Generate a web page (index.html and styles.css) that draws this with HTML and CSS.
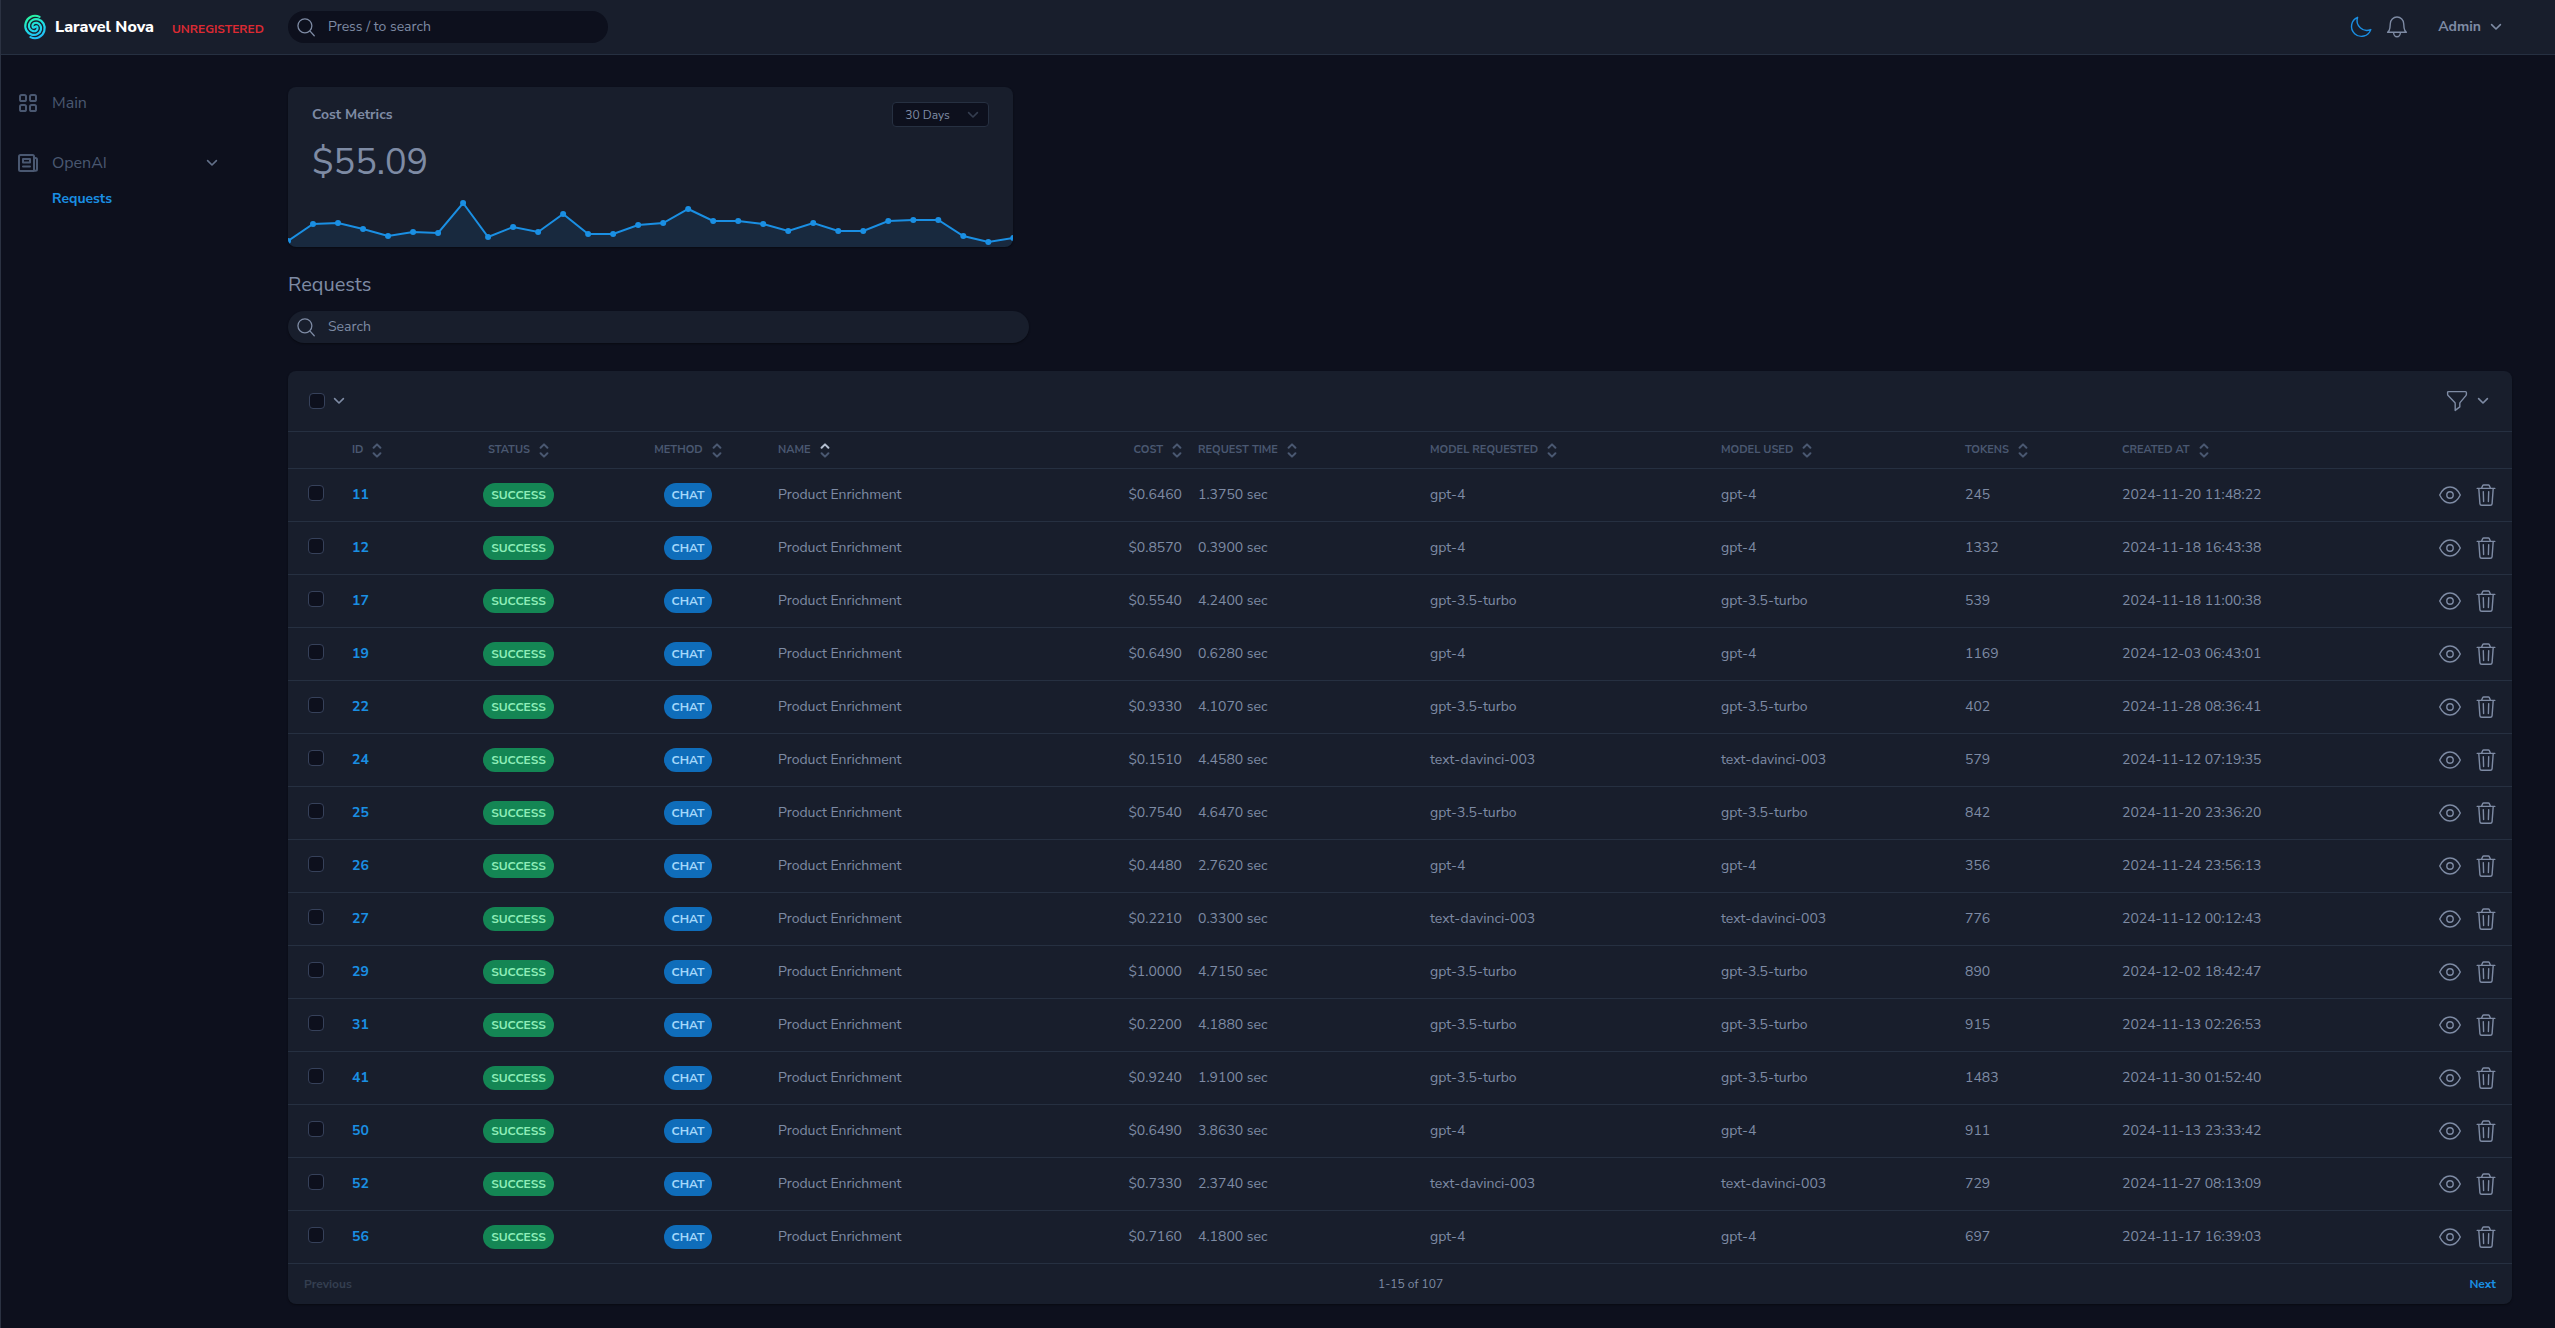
FILE: index.html
```html
<!DOCTYPE html>
<html lang="en">
<head>
<meta charset="utf-8">
<meta name="viewport" content="width=device-width, initial-scale=1">
<title>Requests</title>
<link rel="stylesheet" href="styles.css">
</head>
<body>
<svg class="sprite" aria-hidden="true">
  <symbol id="i-search" viewBox="0 0 24 24"><path d="M16.2 16.2L21 21.6M18.4 10.7a7.6 7.6 0 1 1-15.2 0a7.6 7.6 0 0 1 15.2 0z"/></symbol>
  <symbol id="i-chevron" viewBox="0 0 12 8"><path d="M1.6 1.6L6 6l4.400-4.400"/></symbol>
  <symbol id="i-sort-up" viewBox="0 0 10 6"><path d="M1.600 4.800L5 1.400l3.400 3.400"/></symbol>
  <symbol id="i-sort-down" viewBox="0 0 10 6"><path d="M1.600 1.200L5 4.600l3.400-3.400"/></symbol>
  <symbol id="i-eye" viewBox="0 0 24 24"><path d="M1.700 12C4.200 6.700 7.800 4 12 4s7.800 2.700 10.300 8c-2.500 5.300-6.100 8-10.300 8S4.200 17.300 1.700 12z"/><circle cx="12" cy="12" r="3.200"/></symbol>
  <symbol id="i-trash" viewBox="0 0 24 24"><path d="M3.200 5.400h17.600M7.500 5.200L8.700 2.600Q9 2 9.600 2h4.800q.6 0 .9.600l1.200 2.600M4.800 5.600l1.100 15q.1 1.700 1.800 1.700h8.600q1.700 0 1.800-1.700l1.100-15M9.300 8.600l.3 10M14.700 8.600l-.3 10"/></symbol>
  <symbol id="i-filter" viewBox="0 0 24 24"><path d="M2.600 3.600Q2.600 2.600 3.600 2.600h16.800q1 0 1 1v1.600q0 .8-.5 1.400l-5.700 6.800q-.4.600-.4 1.300v3.200l-4.600 3.500v-6.700q0-.7-.4-1.300L3.100 6.600q-.5-.6-.5-1.400z"/></symbol>
  <symbol id="i-moon" viewBox="0 0 24 24"><path d="M21.800 14.600A9.900 9.900 0 1 1 8.600 2.300a9.900 9.900 0 0 0 13.200 12.300z"/></symbol>
  <symbol id="i-bell" viewBox="0 0 24 24"><path d="M2.600 17.300h18.800c-1.300-1-2.100-2.500-2.300-4.300l-.4-4.300a6.700 6.700 0 0 0-13.400 0L4.900 13c-.2 1.800-1 3.300-2.300 4.300zM8.600 17.500c0 2.300 1.500 4.200 3.400 4.200s3.400-1.900 3.400-4.200"/></symbol>
  <symbol id="i-grid" viewBox="0 0 20 20"><rect x="2" y="2" width="6" height="6" rx="1.600"/><rect x="12" y="2" width="6" height="6" rx="1.600"/><rect x="2" y="12" width="6" height="6" rx="1.600"/><rect x="12" y="12" width="6" height="6" rx="1.600"/></symbol>
  <symbol id="i-news" viewBox="0 0 22 20"><path d="M2 3.500Q2 2 3.500 2h12Q17 2 17 3.500V18H3.500Q2 18 2 16.500zM17 5h1.500Q20 5 20 6.500v9.700a1.500 1.500 0 0 1-3 0M6 6h7v3.500H6zM6 13.500h7"/></symbol>
</svg>

<header class="topbar">
  <div class="brand">
    <a class="logo" href="#">
      <svg class="logo-mark" viewBox="-12 -12 24 24" aria-hidden="true">
        <defs><linearGradient id="swirl" gradientUnits="userSpaceOnUse" x1="-4" y1="-11" x2="4" y2="11"><stop offset="0" stop-color="#2af598"/><stop offset=".45" stop-color="#1fe0e4"/><stop offset="1" stop-color="#22b9fa"/></linearGradient></defs>
        <g fill="none" stroke="url(#swirl)" stroke-width="2" stroke-linecap="round" transform="scale(1.100)">
          <path d="M0 0Q-1 1-1.700.5Q-2.300 0-2.300-1.150Q-2.300-2.300-1.150-3.200Q0-4.100 1.750-3.800Q3.500-3.500 4.700-1.750Q5.900 0 5.350 2.400Q4.800 4.800 2.400 6.250Q0 7.700-3.050 6.900Q-6.100 6.100-7.800 3.050Q-9.500 0-8.450-3.700Q-7.400-7.400-3.700-9.300Q0-11.200 4.150-9.200"/>
          <path d="M0 0Q1-1 1.700-.5Q2.300 0 2.300 1.150Q2.300 2.300 1.150 3.200Q0 4.100-1.750 3.800Q-3.500 3.500-4.700 1.750Q-5.900 0-5.350-2.400Q-4.800-4.800-2.400-6.250Q0-7.700 3.050-6.900Q6.100-6.100 7.800-3.050Q9.500 0 8.450 3.700Q7.400 7.400 3.700 9.300Q0 11.200-4.150 9.200"/>
        </g>
      </svg>
      <span>Laravel Nova</span>
    </a>
    <span class="unregistered">UNREGISTERED</span>
  </div>
  <label class="field global-search">
    <svg class="icon"><use href="#i-search"/></svg>
    <input type="search" placeholder="Press / to search" aria-label="Press / to search">
  </label>
  <div class="user-tools">
    <button class="tool moon" aria-label="Theme"><svg class="icon"><use href="#i-moon"/></svg></button>
    <button class="tool" aria-label="Notifications"><svg class="icon"><use href="#i-bell"/></svg></button>
    <button class="account">Admin <svg class="chevron"><use href="#i-chevron"/></svg></button>
  </div>
</header>

<div class="shell">
  <nav class="sidebar">
    <a class="nav-item" href="#"><svg class="nav-icon"><use href="#i-grid"/></svg><span>Main</span></a>
    <button class="nav-item"><svg class="nav-icon"><use href="#i-news"/></svg><span>OpenAI</span><svg class="chevron"><use href="#i-chevron"/></svg></button>
    <a class="nav-sub" href="#">Requests</a>
  </nav>

  <main class="content">
    <div class="metrics">
      <section class="metric">
        <div class="metric-head">
          <h2>Cost Metrics</h2>
          <span class="select">
            <select aria-label="Range"><option>30 Days</option></select>
            <svg class="chevron"><use href="#i-chevron"/></svg>
          </span>
        </div>
        <p class="metric-value">$55.09</p>
        <svg class="trend" id="trend" viewBox="0 0 725 58" preserveAspectRatio="none" aria-hidden="true"></svg>
      </section>
    </div>

    <h1>Requests</h1>
    <label class="field resource-search">
      <svg class="icon"><use href="#i-search"/></svg>
      <input type="search" placeholder="Search" aria-label="Search">
    </label>

    <section class="panel">
      <div class="toolbar">
        <div class="tool-group">
          <input type="checkbox" aria-label="Select all">
          <button class="plain" aria-label="Selection options"><svg class="chevron"><use href="#i-chevron"/></svg></button>
        </div>
        <button class="plain filter" aria-label="Filters"><svg class="icon"><use href="#i-filter"/></svg><svg class="chevron"><use href="#i-chevron"/></svg></button>
      </div>
      <table>
        <colgroup>
          <col class="c-check"><col class="c-id"><col class="c-status"><col class="c-method"><col class="c-name"><col class="c-cost"><col class="c-time"><col class="c-requested"><col class="c-used"><col class="c-tokens"><col class="c-created"><col class="c-actions">
        </colgroup>
        <thead><tr id="head"></tr></thead>
        <tbody id="rows"></tbody>
      </table>
      <div class="pager">
        <button class="page" disabled>Previous</button>
        <span>1-15 of 107</span>
        <button class="page next">Next</button>
      </div>
    </section>
  </main>
</div>
<script src="app.js"></script>
</body>
</html>
```
FILE: styles.css
```css
* { box-sizing: border-box; }

:root {
  --page: #0d101d;
  --card: #181e2c;
  --line: #263041;
  --text: #7e8ba4;
  --dim: #4a5871;
  --blue: #1a8fe3;
}

body {
  margin: 0;
  min-height: 100vh;
  border-left: 1px solid #2b3242;
  background: var(--page);
  color: var(--text);
  font: 14px/20px "Nunito Sans", "Nunito", "Open Sans", sans-serif;
}

button, input, select { font: inherit; color: inherit; }
button { padding: 0; border: 0; background: none; cursor: pointer; }
a { color: inherit; text-decoration: none; }
h1, h2, p { margin: 0; }

.sprite { position: absolute; width: 0; height: 0; }
.icon, .nav-icon, .chevron, .sort svg {
  display: block;
  flex: none;
  fill: none;
  stroke: currentColor;
  stroke-linecap: round;
  stroke-linejoin: round;
}
.icon { width: 24px; height: 24px; stroke-width: 1.4px; }
.chevron { width: 12px; height: 8px; stroke-width: 1.6px; }

/* Top bar */
.topbar {
  display: flex;
  align-items: center;
  height: 55px;
  padding-right: 53px;
  border-bottom: 1px solid var(--line);
  background: var(--card);
}
.brand { display: flex; align-items: center; gap: 18px; width: 287px; padding-left: 22px; }
.logo { display: flex; align-items: center; gap: 8px; color: #fff; font-size: 16px; font-weight: 800; }
.logo-mark { width: 24px; height: 24px; overflow: visible; }
.unregistered { padding-top: 3px; color: #dc2a33; font-size: 12px; font-weight: 700; }

.field { display: flex; align-items: center; gap: 10px; height: 32px; padding: 0 16px 0 6px; border-radius: 16px; }
.field .icon { height: 22px; }
.field input {
  flex: 1;
  min-width: 0;
  padding: 0;
  border: 0;
  outline: 0;
  background: none;
  appearance: none;
}
.field input::placeholder { color: var(--text); opacity: 1; }
.global-search { width: 320px; background: var(--page); }

.user-tools { display: flex; align-items: center; margin-left: auto; }
.tool { margin-right: 12px; }
.tool + .account { margin-left: 17px; }
.moon { color: var(--blue); }
.account { display: flex; align-items: center; gap: 9px; font-weight: 700; }

/* Layout */
.shell { display: flex; align-items: flex-start; }
.sidebar { flex: none; width: 239px; padding-top: 32px; color: var(--dim); }
.nav-item { display: flex; align-items: center; width: 100%; height: 32px; padding: 0 22px 0 16px; font-size: 16px; text-align: left; }
.nav-item + .nav-item { margin-top: 28px; margin-bottom: 8px; }
.nav-icon { width: 22px; height: 20px; margin-right: 13px; stroke-width: 2px; }
.nav-item .chevron { margin-left: auto; color: #627089; }
.nav-sub { display: block; padding-left: 51px; color: var(--blue); font-weight: 700; line-height: 24px; }

.content { flex: 1; min-width: 0; padding: 32px 43px 24px 48px; }
.metrics { display: grid; grid-template-columns: repeat(3, minmax(0, 1fr)); gap: 24px; }

/* Metric card */
.metric { overflow: hidden; border-radius: 8px; background: var(--card); box-shadow: 0 1px 2px #0006; }
.metric-head { display: flex; align-items: center; justify-content: space-between; padding: 15px 24px 0; }
.metric h2 { font-size: 14px; font-weight: 700; }
.select { display: grid; align-items: center; width: 97px; }
.select select, .select .chevron { grid-area: 1 / 1; }
.select select { height: 25px; padding: 0 12px; border: 1px solid var(--line); border-radius: 4px; background: var(--page); font-size: 12px; appearance: none; }
.select .chevron { justify-self: end; margin-right: 10px; color: #343d4f; pointer-events: none; }
.metric-value { margin-top: 10px; padding: 0 24px; font-size: 36px; line-height: 52px; }
.trend { display: block; width: 100%; height: 58px; }
.trend polygon { fill: var(--blue); opacity: .1; }
.trend polyline { fill: none; stroke: var(--blue); stroke-width: 2px; }
.trend circle { fill: var(--blue); }

h1 { margin: 23px 0 11px; font-size: 20px; font-weight: 400; line-height: 30px; }
.resource-search { width: 33.3333%; background: var(--card); box-shadow: 0 1px 2px #0006; }

/* Resource table */
.panel { margin-top: 28px; border-radius: 8px; background: var(--card); box-shadow: 0 1px 2px #0006; }
.toolbar { display: flex; align-items: center; justify-content: space-between; height: 60px; padding: 0 23px 0 21px; }
.tool-group { display: flex; align-items: center; gap: 8px; }
.filter { display: flex; align-items: center; gap: 8px; }

input[type="checkbox"] {
  display: block;
  width: 16px;
  height: 16px;
  margin: 0;
  border: 1px solid #36415a;
  border-radius: 4px;
  background: var(--page);
  appearance: none;
}
input[type="checkbox"]:checked { background: var(--blue); }

table { width: 100%; border-spacing: 0; table-layout: fixed; }
th, td { padding: 0 8px; border-top: 1px solid var(--line); text-align: left; white-space: nowrap; }
th { height: 37px; color: var(--dim); font-size: 11px; font-weight: 700; text-transform: uppercase; }
td { height: 53px; }
.c-check { width: 56px; }
.c-id { width: 87px; }
.c-status { width: 175px; }
.c-method { width: 164px; }
.c-name { width: 290px; }
.c-cost { width: 130px; }
.c-time { width: 232px; }
.c-requested { width: 291px; }
.c-used { width: 244px; }
.c-tokens { width: 157px; }
.c-created { width: 260px; }
.c-actions { width: 138px; }
.center { text-align: center; }
.right { text-align: right; }
.check { padding: 0 0 4px 20px; }

.sort { display: inline-flex; align-items: center; gap: 9px; font-weight: inherit; text-transform: inherit; vertical-align: middle; }
.arrows { display: grid; gap: 3px; }
.sort svg { width: 10px; height: 6px; stroke-width: 2px; }
.sort .active { color: #b4bfd0; }

.id { color: var(--blue); font-weight: 700; }
.badge { display: inline-block; padding: 0 8px; border-radius: 12px; font-size: 12px; font-weight: 700; line-height: 24px; vertical-align: middle; }
.success { background: #148654; color: #8eedb8; }
.chat { background: #0f6dba; color: #a5d8fa; }
.actions { display: flex; justify-content: flex-end; gap: 12px; padding-right: 6px; }

.pager { display: flex; align-items: center; justify-content: space-between; height: 41px; padding: 0 16px; border-top: 1px solid var(--line); font-size: 12px; }
.page { font-weight: 700; }
.page:disabled { color: #343e50; }
.next { color: var(--blue); }
```
FILE: app.js
```js
const columns = [
  ["ID", ""], ["Status", "center"], ["Method", "center"], ["Name", "", true],
  ["Cost", "right"], ["Request Time", ""], ["Model Requested", ""],
  ["Model Used", ""], ["Tokens", ""], ["Created At", ""]
];

const requests = [
  [11, "$0.6460", "1.3750", "gpt-4", 245, "2024-11-20 11:48:22"],
  [12, "$0.8570", "0.3900", "gpt-4", 1332, "2024-11-18 16:43:38"],
  [17, "$0.5540", "4.2400", "gpt-3.5-turbo", 539, "2024-11-18 11:00:38"],
  [19, "$0.6490", "0.6280", "gpt-4", 1169, "2024-12-03 06:43:01"],
  [22, "$0.9330", "4.1070", "gpt-3.5-turbo", 402, "2024-11-28 08:36:41"],
  [24, "$0.1510", "4.4580", "text-davinci-003", 579, "2024-11-12 07:19:35"],
  [25, "$0.7540", "4.6470", "gpt-3.5-turbo", 842, "2024-11-20 23:36:20"],
  [26, "$0.4480", "2.7620", "gpt-4", 356, "2024-11-24 23:56:13"],
  [27, "$0.2210", "0.3300", "text-davinci-003", 776, "2024-11-12 00:12:43"],
  [29, "$1.0000", "4.7150", "gpt-3.5-turbo", 890, "2024-12-02 18:42:47"],
  [31, "$0.2200", "4.1880", "gpt-3.5-turbo", 915, "2024-11-13 02:26:53"],
  [41, "$0.9240", "1.9100", "gpt-3.5-turbo", 1483, "2024-11-30 01:52:40"],
  [50, "$0.6490", "3.8630", "gpt-4", 911, "2024-11-13 23:33:42"],
  [52, "$0.7330", "2.3740", "text-davinci-003", 729, "2024-11-27 08:13:09"],
  [56, "$0.7160", "4.1800", "gpt-4", 697, "2024-11-17 16:39:03"]
];

// Chart heights measured from the top of the 58px trend area.
const trend = [52, 35, 34, 40, 47, 43, 44, 14, 48, 38, 43, 25, 45, 45, 36, 34, 20, 32, 32, 35, 42, 34, 42, 42, 32, 31, 31, 47, 53, 49];

document.getElementById("head").innerHTML = "<th></th>" + columns.map(([label, align, sorted]) => `
  <th class="${align}"><button class="sort">${label}
    <span class="arrows">
      <svg class="${sorted ? "active" : ""}"><use href="#i-sort-up"/></svg>
      <svg><use href="#i-sort-down"/></svg>
    </span>
  </button></th>`).join("") + "<th></th>";

document.getElementById("rows").innerHTML = requests.map(([id, cost, time, model, tokens, created]) => `
  <tr>
    <td class="check"><input type="checkbox" aria-label="Select ${id}"></td>
    <td><a class="id" href="#">${id}</a></td>
    <td class="center"><span class="badge success">SUCCESS</span></td>
    <td class="center"><span class="badge chat">CHAT</span></td>
    <td>Product Enrichment</td>
    <td class="right">${cost}</td>
    <td>${time} sec</td>
    <td>${model}</td>
    <td>${model}</td>
    <td>${tokens}</td>
    <td>${created}</td>
    <td><div class="actions">
      <a href="#" aria-label="View ${id}"><svg class="icon"><use href="#i-eye"/></svg></a>
      <button aria-label="Delete ${id}"><svg class="icon"><use href="#i-trash"/></svg></button>
    </div></td>
  </tr>`).join("");

const points = trend.map((y, i) => [i * 25, y]);
const line = points.map(p => p.join()).join(" ");
document.getElementById("trend").innerHTML =
  `<polygon points="0,58 ${line} 725,58"/><polyline points="${line}"/>` +
  points.map(([x, y]) => `<circle cx="${x}" cy="${y}" r="3"/>`).join("");
```
